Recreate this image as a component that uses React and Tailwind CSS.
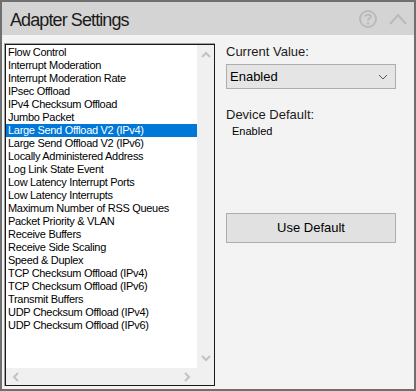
import React from 'react';

const items = [
    'Flow Control',
    'Interrupt Moderation',
    'Interrupt Moderation Rate',
    'IPsec Offload',
    'IPv4 Checksum Offload',
    'Jumbo Packet',
    'Large Send Offload V2 (IPv4)',
    'Large Send Offload V2 (IPv6)',
    'Locally Administered Address',
    'Log Link State Event',
    'Low Latency Interrupt Ports',
    'Low Latency Interrupts',
    'Maximum Number of RSS Queues',
    'Packet Priority & VLAN',
    'Receive Buffers',
    'Receive Side Scaling',
    'Speed & Duplex',
    'TCP Checksum Offload (IPv4)',
    'TCP Checksum Offload (IPv6)',
    'Transmit Buffers',
    'UDP Checksum Offload (IPv4)',
    'UDP Checksum Offload (IPv6)',
];

const font = { fontFamily: '"Liberation Sans", Arial, sans-serif' };

function Chevron({ dir, className }) {
    const paths = {
        up: 'M1 6 L5 2 L9 6',
        down: 'M1 2 L5 6 L9 2',
        left: 'M6 1 L2 5 L6 9',
        right: 'M2 1 L6 5 L2 9',
    };
    const vertical = dir === 'up' || dir === 'down';
    return (
        <svg
            width={vertical ? 10 : 8}
            height={vertical ? 8 : 10}
            viewBox={vertical ? '0 0 10 8' : '0 0 8 10'}
            className={className}
        >
            <path d={paths[dir]} fill="none" stroke="#c3c3c3" strokeWidth="2" />
        </svg>
    );
}

export default function App() {
    return (
        <div
            className="w-[416px] h-[391px] border-2 border-[#6f6f6f] bg-[#f3f3f3] flex flex-col overflow-hidden"
            style={font}
        >
            {/* Header */}
            <div className="h-[33px] bg-[#d4d4d4] flex items-center justify-between pl-[8px] pr-[6px] shrink-0">
                <span className="text-[18px] tracking-[-0.9px] text-[#1b1b1b] leading-none pt-[2px]">Adapter Settings</span>
                <div className="flex items-center gap-[10px]">
                    <svg width="20" height="20" viewBox="0 0 20 20">
                        <circle cx="10" cy="10" r="8" fill="none" stroke="#bababa" strokeWidth="2" />
                        <path d="M7.2 7.6 C7.2 5.2 12.8 5.2 12.8 7.6 C12.8 9.4 10 9.4 10 11.6" fill="none" stroke="#bababa" strokeWidth="2" />
                        <circle cx="10" cy="14.4" r="1.2" fill="#bababa" />
                    </svg>
                    <svg width="20" height="14" viewBox="0 0 20 14">
                        <path d="M2 12 L10 3 L18 12" fill="none" stroke="#bababa" strokeWidth="2" />
                    </svg>
                </div>
            </div>

            {/* Body */}
            <div className="flex pl-[2px] pt-[8px]">
                {/* List box */}
                <div className="w-[211px] h-[343px] border-l border-t border-[#a0a0a0] shrink-0">
                    <div className="w-full h-full border border-[#1a1a1a] bg-white grid grid-cols-[1fr_17px] grid-rows-[1fr_17px]">
                        <div className="pt-[1px] overflow-hidden">
                            {items.map((item, i) => (
                                <div
                                    key={item}
                                    className={
                                        'h-[13px] leading-[13px] text-[11px] tracking-[-0.3px] pl-[2px] whitespace-nowrap ' +
                                        (i === 6 ? 'bg-[#0078d7] text-white' : 'text-black')
                                    }
                                >
                                    {item}
                                </div>
                            ))}
                        </div>
                        <div className="bg-[#f0f0f0] flex flex-col items-center justify-between py-[6px]">
                            <Chevron dir="up" />
                            <Chevron dir="down" />
                        </div>
                        <div className="bg-[#f0f0f0] flex items-center justify-between px-[6px]">
                            <Chevron dir="left" />
                            <Chevron dir="right" />
                        </div>
                        <div className="bg-[#f0f0f0]" />
                    </div>
                </div>

                {/* Right column */}
                <div className="flex flex-col pl-[11px] w-[181px]">
                    <div className="text-[13px] text-[#1b1b1b] leading-[16px] mt-[1px]">Current Value:</div>
                    <div className="mt-[4px] h-[25px] w-[170px] bg-[#e5e5e5] border border-[#adadad] flex items-center justify-between pl-[3px] pr-[7px]">
                        <span className="text-[13px] text-black">Enabled</span>
                        <svg width="10" height="6" viewBox="0 0 10 6">
                            <path d="M1 1 L5 5 L9 1" fill="none" stroke="#555" strokeWidth="1" />
                        </svg>
                    </div>
                    <div className="mt-[18px] text-[13px] text-[#1b1b1b] leading-[16px]">Device Default:</div>
                    <div className="mt-[1px] pl-[6px] text-[11px] text-black leading-[14px]">Enabled</div>
                    <button className="mt-[75px] h-[30px] w-[170px] bg-[#e1e1e1] border border-[#adadad] text-[13px] text-black">
                        Use Default
                    </button>
                </div>
            </div>
        </div>
    );
}
